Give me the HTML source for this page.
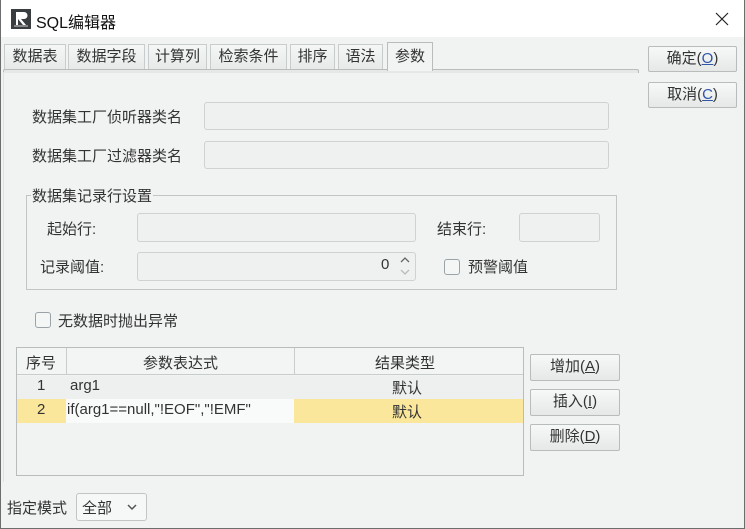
<!DOCTYPE html>
<html><head><meta charset="utf-8"><style>
*{box-sizing:border-box;margin:0;padding:0}
body{width:745px;height:529px;overflow:hidden;background:#f1f2f2;font-family:"Liberation Sans","Noto Sans CJK SC",sans-serif;font-size:15px;color:#333;position:relative}
.a{position:absolute}
.win{position:absolute;left:0;top:0;width:745px;height:529px;border:1px solid #6d6d6d;border-top:none}
.title{left:0;top:0;width:745px;height:37px;background:#fff}
.tab{position:absolute;top:44px;height:26px;border:1px solid #c9cccc;border-bottom:none;background:linear-gradient(#f5f6f6,#e7e9e9);text-align:center;line-height:24px;font-size:15px;color:#333}
.inp{position:absolute;border:1px solid #cfd2d2;border-radius:3px;background:#eff0f0}
.btn{position:absolute;border:1px solid #b8bcbc;border-radius:2px;background:linear-gradient(#f7f8f8,#e6e8e8);text-align:center;line-height:24px;font-size:15px;color:#333}
.cb{position:absolute;width:16px;height:16px;border:1px solid #9aa3a8;border-radius:3px;background:#f4f5f5}
.lbl{position:absolute;font-size:15px;color:#333;white-space:nowrap}
u{text-decoration:underline}
.hl{color:#2f54a8}
</style></head><body>
<div class="a title"></div>
<div class="win"></div>
<svg class="a" style="left:11px;top:9px" width="20" height="20"><rect width="20" height="20" fill="#3a3d40"/><path d="M5 3h8a3 3 0 0 1 0 7h-3l5 6h-3l-5-6v6H5z" fill="#fff"/><rect x="3" y="16" width="14" height="2" fill="#888"/></svg>
<div class="lbl" style="left:36px;top:9px;font-size:16px;color:#111">SQL编辑器</div>
<svg class="a" style="left:715px;top:12px" width="14" height="14"><path d="M1 1L13 13M13 1L1 13" stroke="#222" stroke-width="1.2"/></svg>

<div class="tab" style="left:4px;width:62px">数据表</div>
<div class="tab" style="left:68px;width:77px">数据字段</div>
<div class="tab" style="left:148px;width:59px">计算列</div>
<div class="tab" style="left:210px;width:77px">检索条件</div>
<div class="tab" style="left:290px;width:45px">排序</div>
<div class="tab" style="left:338px;width:45px">语法</div>
<div class="a" style="left:3px;top:69px;width:636px;height:4px;border:1px solid #b9bcbc;border-bottom:none;border-radius:2px 2px 0 0;background:#e6e8e8"></div>
<div class="a" style="left:3px;top:72px;width:1px;height:410px;background:#e0e2e2"></div>
<div class="tab" style="left:387px;top:42px;width:46px;height:29px;background:#f2f3f3;line-height:28px;border-color:#b9bcbc">参数</div>

<div class="btn" style="left:648px;top:46px;width:89px;height:26px">确定(<u class="hl">O</u>)</div>
<div class="btn" style="left:648px;top:82px;width:89px;height:26px">取消(<u class="hl">C</u>)</div>

<div class="lbl" style="left:32px;top:106px">数据集工厂侦听器类名</div>
<div class="inp" style="left:204px;top:102px;width:405px;height:28px"></div>
<div class="lbl" style="left:32px;top:145px">数据集工厂过滤器类名</div>
<div class="inp" style="left:204px;top:141px;width:405px;height:28px"></div>

<div class="a" style="left:26px;top:195px;width:591px;height:95px;border:1px solid #c2c5c5"></div>
<div class="lbl" style="left:31px;top:185px;background:#f1f2f2;padding:0 1px">数据集记录行设置</div>
<div class="lbl" style="left:47px;top:218px">起始行:</div>
<div class="inp" style="left:137px;top:213px;width:279px;height:29px"></div>
<div class="lbl" style="left:437px;top:218px">结束行:</div>
<div class="inp" style="left:519px;top:213px;width:81px;height:29px"></div>
<div class="lbl" style="left:40px;top:256px">记录阈值:</div>
<div class="inp" style="left:137px;top:252px;width:279px;height:29px"></div>
<div class="lbl" style="left:381px;top:256px">0</div>
<svg class="a" style="left:398px;top:254px" width="14" height="24"><path d="M3 8l4-4 4 4" stroke="#666" fill="none" stroke-width="1.3"/><path d="M3 16l4 4 4-4" stroke="#bbb" fill="none" stroke-width="1.3"/></svg>
<div class="cb" style="left:444px;top:259px"></div>
<div class="lbl" style="left:468px;top:256px">预警阈值</div>

<div class="cb" style="left:35px;top:312px"></div>
<div class="lbl" style="left:58px;top:310px">无数据时抛出异常</div>

<div class="a" style="left:16px;top:347px;width:508px;height:129px;border:1px solid #b9bcbc;background:#f1f2f2"></div>
<div class="a" style="left:17px;top:348px;width:506px;height:27px;background:#f3f4f4;border-bottom:1px solid #c9cccc"></div>
<div class="a" style="left:66px;top:348px;width:1px;height:27px;background:#c9cccc"></div>
<div class="a" style="left:294px;top:348px;width:1px;height:27px;background:#c9cccc"></div>
<div class="lbl" style="left:26px;top:352px">序号</div>
<div class="lbl" style="left:143px;top:352px">参数表达式</div>
<div class="lbl" style="left:375px;top:352px">结果类型</div>
<div class="a" style="left:17px;top:376px;width:506px;height:23px;background:#eeefef"></div>
<div class="lbl" style="left:37px;top:377px">1</div>
<div class="lbl" style="left:70px;top:377px">arg1</div>
<div class="lbl" style="left:392px;top:377px">默认</div>
<div class="a" style="left:17px;top:399px;width:49px;height:24px;background:#fbe79c"></div>
<div class="a" style="left:66px;top:399px;width:228px;height:24px;background:#f9fafa"></div>
<div class="a" style="left:294px;top:399px;width:229px;height:24px;background:#fbe79c"></div>
<div class="lbl" style="left:37px;top:401px">2</div>
<div class="lbl" style="left:67px;top:401px">if(arg1==null,"!EOF","!EMF"</div>
<div class="lbl" style="left:392px;top:401px">默认</div>

<div class="btn" style="left:530px;top:354px;width:90px;height:27px">增加(<u>A</u>)</div>
<div class="btn" style="left:530px;top:389px;width:90px;height:27px">插入(<u>I</u>)</div>
<div class="btn" style="left:530px;top:424px;width:90px;height:27px">删除(<u>D</u>)</div>

<div class="lbl" style="left:7px;top:497px">指定模式</div>
<div class="a" style="left:76px;top:493px;width:71px;height:28px;border:1px solid #c2c5c5;border-radius:3px;background:#f6f7f7"></div>
<div class="lbl" style="left:82px;top:497px">全部</div>
<svg class="a" style="left:126px;top:502px" width="12" height="10"><path d="M2 3l4 4 4-4" stroke="#555" fill="none" stroke-width="1.5"/></svg>
</body></html>
